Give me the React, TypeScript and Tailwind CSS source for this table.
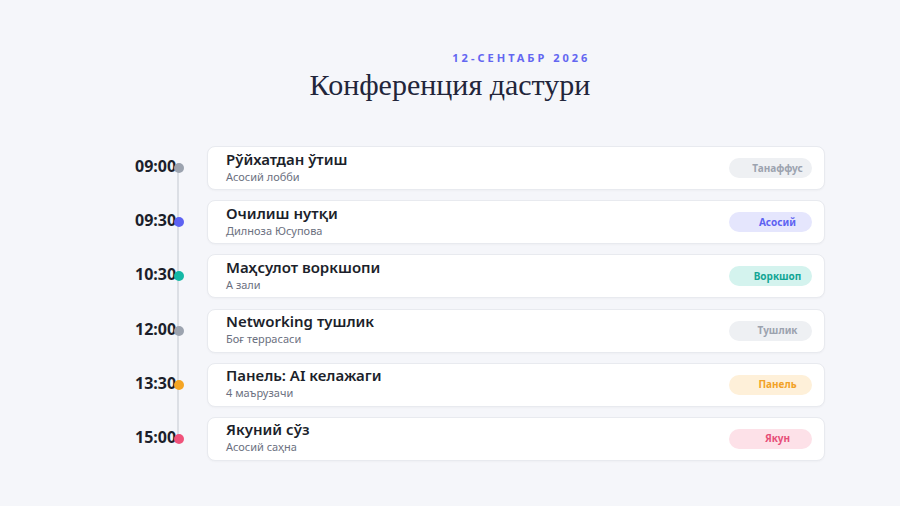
import React from "react";

type Item = {
  time: string;
  title: string;
  place: string;
  tag: string;
  dot: string;
  badge: string;
};

const items: Item[] = [
  {
    time: "09:00",
    title: "Рўйхатдан ўтиш",
    place: "Асосий лобби",
    tag: "Танаффус",
    dot: "bg-[#9ca3af]",
    badge: "bg-[#eef0f3] text-[#9ca3af]",
  },
  {
    time: "09:30",
    title: "Очилиш нутқи",
    place: "Дилноза Юсупова",
    tag: "Асосий",
    dot: "bg-[#5d62f2]",
    badge: "bg-[#e5e6fd] text-[#5d62f2]",
  },
  {
    time: "10:30",
    title: "Маҳсулот воркшопи",
    place: "А зали",
    tag: "Воркшоп",
    dot: "bg-[#14b8a6]",
    badge: "bg-[#d4f3ee] text-[#12a594]",
  },
  {
    time: "12:00",
    title: "Networking тушлик",
    place: "Боғ террасаси",
    tag: "Тушлик",
    dot: "bg-[#9ca3af]",
    badge: "bg-[#eef0f3] text-[#9ca3af]",
  },
  {
    time: "13:30",
    title: "Панель: AI келажаги",
    place: "4 маърузачи",
    tag: "Панель",
    dot: "bg-[#f5a524]",
    badge: "bg-[#fef0d9] text-[#f2a227]",
  },
  {
    time: "15:00",
    title: "Якуний сўз",
    place: "Асосий саҳна",
    tag: "Якун",
    dot: "bg-[#f0527a]",
    badge: "bg-[#fde1e8] text-[#e74f78]",
  },
];

export default function App() {
  return (
    <div className="w-[900px] h-[506px] bg-[#f5f6fa] font-['Noto_Sans',sans-serif] overflow-hidden">
      <header className="flex justify-center pt-[50px]">
        <div className="flex flex-col items-end">
          <div className="text-[11px] font-bold tracking-[3px] text-[#6366f1] leading-[16px]">
            12-СЕНТАБР 2026
          </div>
          <h1 className="font-['Liberation_Serif',serif] text-[30px] leading-[38px] text-[#22253a]">
            Конференция дастури
          </h1>
        </div>
      </header>

      <main className="relative ml-[135px] mr-[75px] mt-[42px]">
        <div className="absolute left-[42px] top-[22px] bottom-[22px] w-[2px] bg-[#dcdfe5]" />
        <div className="flex flex-col gap-[10.2px]">
          {items.map((item) => (
            <div key={item.time} className="flex items-center">
              <div className="relative w-[72px] h-[44px] flex items-center">
                <span className="text-[16px] font-bold text-[#1c1f2b] leading-none -mt-[4px]">
                  {item.time}
                </span>
                <span
                  className={`absolute left-[39px] top-[17px] w-[10px] h-[10px] rounded-full ${item.dot}`}
                />
              </div>
              <div className="flex-1 h-[44px] bg-white border border-[#e8eaef] rounded-[8px] shadow-[0_1px_2px_rgba(20,25,40,0.03)] flex items-center justify-between pl-[18px] pr-[12px]">
                <div className="flex flex-col pb-[3px]">
                  <span className="text-[15px] font-semibold text-[#1c1f2b] leading-[19px]">
                    {item.title}
                  </span>
                  <span className="text-[11px] text-[#6b7080] leading-[15px]">
                    {item.place}
                  </span>
                </div>
                <span
                  className={`w-[83px] h-[20px] rounded-full flex items-center justify-center pl-[14px] text-[10px] font-bold ${item.badge}`}
                >
                  {item.tag}
                </span>
              </div>
            </div>
          ))}
        </div>
      </main>
    </div>
  );
}
